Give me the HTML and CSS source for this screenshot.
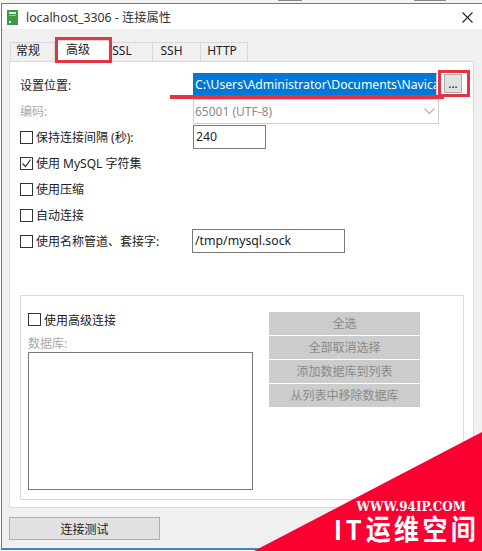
FILE: index.html
```html
<!DOCTYPE html>
<html>
<head>
    <title>localhost_3306 - 连接属性</title>
    <link rel="stylesheet" href="styles.css">
</head>
<body>
    <div id="strip">
        <span class="strip-bit first"></span>
        <span class="strip-bit second"></span>
    </div>
    <div id="window">
        <header id="titlebar">
            <svg class="app-icon" width="11" height="15" viewBox="0 0 11 15">
                <rect width="11" height="15" fill="#3f9a45"/>
                <rect x="2" y="2" width="7" height="2" fill="#d5ecd6"/>
                <rect x="2" y="5" width="7" height="1" fill="#8ccb8f"/>
                <rect x="2" y="11" width="2" height="2" fill="#e6f4e6"/>
            </svg>
            <span class="title-text">localhost_3306 - 连接属性</span>
            <svg class="close-icon" width="11" height="11" viewBox="0 0 11 11">
                <path d="M.5.5l10 10M10.5.5l-10 10" stroke="#222" stroke-width="1.1" fill="none"/>
            </svg>
        </header>
        <div id="body">
            <div id="tabs">
                <div class="tab tab-general">常规</div>
                <div class="tab active">高级</div>
                <div class="tab tab-ssl">SSL</div>
                <div class="tab tab-ssh">SSH</div>
                <div class="tab tab-http">HTTP</div>
            </div>
            <div id="panel">
                <div class="row">
                    <label class="row-label">设置位置:</label>
                    <div class="path-input">C:\Users\Administrator\Documents\Navicat</div>
                    <button type="button" class="browse">...</button>
                </div>
                <div class="row">
                    <label class="row-label muted">编码:</label>
                    <div class="select">
                        <span>65001 (UTF-8)</span>
                        <svg width="11" height="6" viewBox="0 0 11 6">
                            <path d="M.5.5l5 5 5-5" stroke="#b5b5b5" stroke-width="1.2" fill="none"/>
                        </svg>
                    </div>
                </div>
                <div class="row">
                    <label class="row-label check-label"><span class="check"></span>保持连接间隔 (秒):</label>
                    <div class="input short">240</div>
                </div>
                <div class="row">
                    <label class="row-label check-label wide">
                        <span class="check">
                            <svg width="11" height="11" viewBox="0 0 11 11">
                                <path d="M1.5 5.5l3 3 5-7" stroke="#333" stroke-width="1.2" fill="none"/>
                            </svg>
                        </span>使用 MySQL 字符集
                    </label>
                </div>
                <div class="row">
                    <label class="row-label check-label wide"><span class="check"></span>使用压缩</label>
                </div>
                <div class="row">
                    <label class="row-label check-label wide"><span class="check"></span>自动连接</label>
                </div>
                <div class="row">
                    <label class="row-label check-label"><span class="check"></span>使用名称管道、套接字:</label>
                    <div class="input socket">/tmp/mysql.sock</div>
                </div>
                <div id="group">
                    <div class="group-left">
                        <label class="check-label group-check"><span class="check"></span>使用高级连接</label>
                        <div class="muted db-label">数据库:</div>
                        <div class="listbox"></div>
                    </div>
                    <div class="group-buttons">
                        <button type="button" class="flat">全选</button>
                        <button type="button" class="flat">全部取消选择</button>
                        <button type="button" class="flat">添加数据库到列表</button>
                        <button type="button" class="flat">从列表中移除数据库</button>
                    </div>
                </div>
            </div>
            <button type="button" id="testButton">连接测试</button>
        </div>
    </div>

    <!-- red marks drawn over the screenshot -->
    <div class="mark mark-tab"></div>
    <div class="mark mark-line"></div>
    <div class="mark mark-browse"></div>

    <div id="stamp">
        <div class="stamp-url">WWW.94IP.COM</div>
        <div class="stamp-name"><span class="stamp-it">IT</span>运维空间</div>
    </div>
</body>
</html>
```

FILE: styles.css
```css
* {
    box-sizing: border-box;
}
html, body {
    height: 100%;
}
body {
    margin: 0;
    height: 551px;
    overflow: hidden;
    background: #fff;
    position: relative;
    font-family: "Noto Sans", "Noto Sans CJK SC", sans-serif;
    font-size: 12px;
    color: #222;
}
#strip {
    height: 3px;
    background: #f4f4f4;
    position: relative;
}
.strip-bit {
    position: absolute;
    top: 0;
    height: 1px;
    background: #888;
}
.strip-bit.first {
    left: 278px;
    width: 24px;
}
.strip-bit.second {
    left: 414px;
    width: 32px;
}
#window {
    height: 547px;
    margin-left: 1px;
    border: 1px solid #2f8bcb;
    border-width: 1px 0 2px 1px;
    display: flex;
    flex-direction: column;
}
#titlebar {
    height: 25px;
    flex: none;
    background: #fff;
    display: flex;
    align-items: center;
    padding: 0 9px 0 5px;
}
.app-icon {
    flex: none;
    margin-top: 2px;
}
.title-text {
    margin-left: 8px;
    font-size: 12.3px;
    flex: 1;
    color: #333;
}
.close-icon {
    flex: none;
    margin-top: 1px;
}
#body {
    flex: 1;
    background: #f0f0f0;
    padding: 11px 8px 0 7px;
}
#tabs {
    display: flex;
    height: 22px;
    align-items: flex-end;
    padding-left: 1px;
}
.tab {
    height: 20px;
    line-height: 15px;
    text-align: center;
    font-size: 12px;
    border: 1px solid #d9d9d9;
    border-bottom: none;
    border-left: none;
    background: #f0f0f0;
}
.tab-general {
    width: 45px;
    border-left: 1px solid #d9d9d9;
    padding-right: 9px;
}
.tab-ssl {
    width: 43px;
    padding-right: 18px;
}
.tab-ssh {
    width: 48px;
    padding-right: 10px;
}
.tab-http {
    width: 47px;
    padding-right: 4px;
}
.tab.active {
    width: 55px;
    height: 22px;
    line-height: 15px;
    background: #fff;
    padding-right: 8px;
    padding-top: 1px;
}
#panel {
    height: 447px;
    margin-top: -1px;
    background: #fff;
    border: 1px solid #d9d9d9;
    padding: 10px 9px 0 10px;
    position: relative;
}
.row {
    height: 26px;
    display: flex;
    align-items: center;
}
.row-label {
    width: 173px;
    flex: none;
    display: flex;
    align-items: center;
    white-space: nowrap;
}
.row-label.wide {
    width: auto;
}
.muted {
    color: #a9a9a9;
}
.check-label {
    display: flex;
    align-items: center;
}
.check {
    width: 13px;
    height: 13px;
    flex: none;
    border: 1px solid #333;
    background: #fff;
    margin-right: 3px;
    display: flex;
    align-items: center;
    justify-content: center;
}
.path-input {
    width: 244px;
    height: 24px;
    flex: none;
    border-top: 1px solid #0078d7;
    border-right: 1px solid #ccc;
    background: #0078d7;
    background-clip: padding-box;
    color: #fff;
    font-size: 12.2px;
    line-height: 22px;
    padding: 0 0 0 2px;
    overflow: hidden;
    white-space: nowrap;
}
.browse {
    width: 18px;
    height: 19px;
    flex: none;
    margin: 0 0 4px 7px;
    padding: 0 0 4px;
    border: 1px solid #adadad;
    background: #e1e1e1;
    font: 12px "Noto Sans", sans-serif;
    color: #222;
}
.select {
    width: 246px;
    height: 25px;
    flex: none;
    border: 1px solid #d0d0d0;
    background: #fff;
    color: #8c8c8c;
    padding: 0 3px 0 1px;
    display: flex;
    align-items: center;
    justify-content: space-between;
}
.input {
    height: 24px;
    flex: none;
    border: 1px solid #7a7a7a;
    background: #fff;
    line-height: 22px;
    padding-left: 2px;
    font-size: 12.3px;
}
.input.short {
    width: 73px;
}
.input.socket {
    width: 153px;
    margin-left: -1px;
}
#group {
    width: 444px;
    height: 205px;
    margin-top: 41px;
    border: 1px solid #dcdcdc;
    padding: 16px 0 0 7px;
    display: flex;
}
.group-left {
    width: 225px;
    flex: none;
}
.group-check {
    height: 15px;
}
.db-label {
    margin-top: 8px;
    height: 17px;
    line-height: 17px;
}
.listbox {
    width: 225px;
    height: 138px;
    border: 1px solid #7a7a7a;
    background: #fff;
}
.group-buttons {
    width: 151px;
    margin-left: 16px;
    display: flex;
    flex-direction: column;
    gap: 1px;
}
.flat {
    height: 23px;
    padding: 0 0 2px;
    border: none;
    background: #cccccc;
    color: #8a8a8a;
    font: 12px "Noto Sans", "Noto Sans CJK SC", sans-serif;
}
#testButton {
    display: block;
    width: 151px;
    height: 23px;
    margin-top: 9px;
    padding: 0;
    border: 1px solid #adadad;
    background: #e1e1e1;
    color: #222;
    font: 12px "Noto Sans", "Noto Sans CJK SC", sans-serif;
}
.mark {
    position: absolute;
}
.mark-tab {
    left: 55px;
    top: 37px;
    width: 57px;
    height: 26px;
    border: 3px solid #e5333f;
}
.mark-line {
    left: 170px;
    top: 95px;
    width: 274px;
    height: 4px;
    background: #e5333f;
}
.mark-browse {
    left: 438px;
    top: 70px;
    width: 32px;
    height: 27px;
    border: 3px solid #e5333f;
}
#stamp {
    position: absolute;
    right: 0;
    bottom: 0;
    width: 228px;
    height: 119px;
    background: #fb0030;
    clip-path: polygon(100% 0, 100% 100%, 0 100%);
    color: #fff;
}
.stamp-url {
    position: absolute;
    right: 16px;
    bottom: 37px;
    font-family: "DejaVu Serif", serif;
    font-weight: bold;
    font-size: 12px;
    line-height: 14px;
    white-space: nowrap;
}
.stamp-name {
    position: absolute;
    right: 3px;
    bottom: 4px;
    font-family: "Noto Sans CJK SC", sans-serif;
    font-weight: bold;
    font-size: 25px;
    line-height: 29px;
    letter-spacing: 3.3px;
    white-space: nowrap;
    transform: scaleY(1.15);
    transform-origin: bottom;
}
.stamp-it {
    font-family: "Liberation Sans", sans-serif;
    letter-spacing: 4.5px;
}
```
